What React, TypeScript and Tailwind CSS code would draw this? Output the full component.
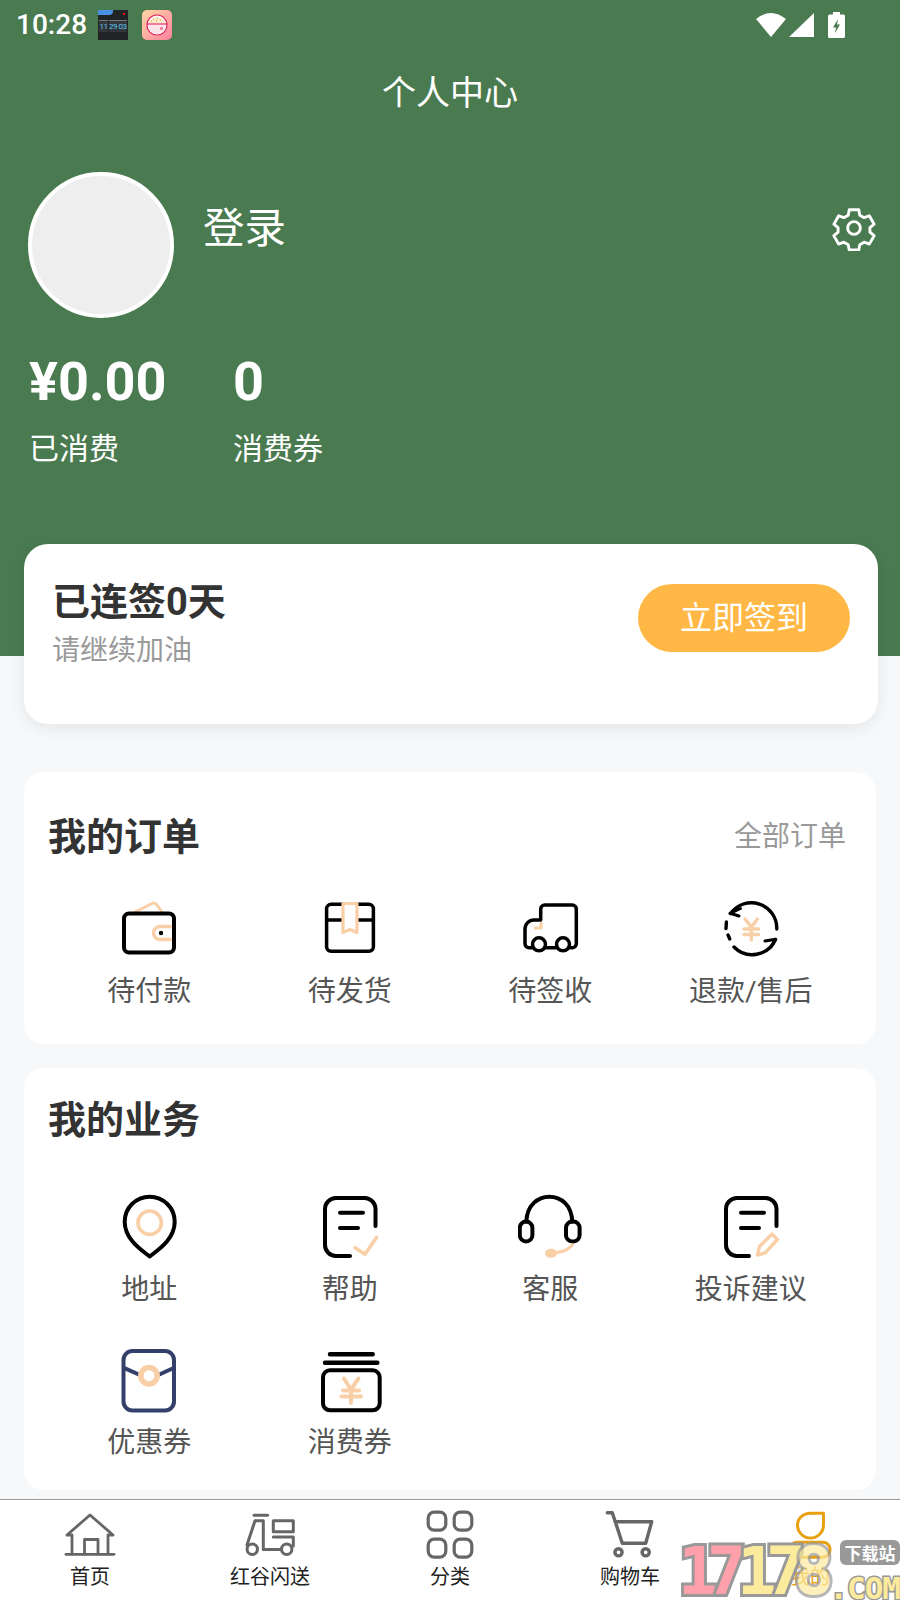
import type { ReactNode } from "react";

const PEACH = "#f8cfa6";

interface IconProps {
  children: ReactNode;
  w?: number;
  h?: number;
  stroke?: string;
  sw?: number;
}

const Icon: React.FC<IconProps> = ({ children, w = 64, h = 64, stroke = "#000", sw = 4 }) => {
  return (
    <svg width={w} height={h} viewBox={`0 0 ${w} ${h}`} fill="none" stroke={stroke} strokeWidth={sw} strokeLinecap="round" strokeLinejoin="round">
      {children}
    </svg>
  );
};

const WalletIcon = () => (
  <Icon>
    <path d="M18 16 L35 7.5 Q38 6 40 9 L45 16" stroke={PEACH} strokeWidth={3} />
    <rect x="7" y="17.5" width="50" height="39" rx="5" />
    <path d="M54.7 30.5 H43 a6.5 6.5 0 0 0 0 13 H54.7" stroke={PEACH} strokeWidth={3.4} strokeLinecap="butt" />
    <circle cx="44" cy="37" r="2.2" fill="#000" stroke="none" />
  </Icon>
);

const BoxIcon = () => (
  <Icon sw={3.5}>
    <rect x="8.6" y="8.3" width="46.8" height="47" rx="4.5" />
    <path d="M8.6 24 H55.4" />
    <path d="M25 7.5 V36.5 L32 33.5 L39 36.5 V7.5 Z" stroke={PEACH} strokeWidth={3.2} fill="#fff" />
  </Icon>
);

const TruckIcon = () => (
  <Icon sw={3.5}>
    <path d="M22.7 24 V13 a4 4 0 0 1 4-4 H54.3 a4 4 0 0 1 4 4 V47.7 a4 4 0 0 1 -4 4 H51.5 M38.5 51.7 H27.5 M14.5 51.7 H11 a4 4 0 0 1 -4-4 V33 a9 9 0 0 1 9-9 H22.7" />
    <circle cx="21" cy="48.3" r="6.5" />
    <circle cx="45" cy="48.3" r="6.5" />
    <path d="M23 27.5 V32 H17.5" stroke={PEACH} strokeWidth={3.2} />
  </Icon>
);

const RefundIcon = () => (
  <Icon sw={3.4}>
    <path d="M11.5 17.5 A25.5 25.5 0 0 1 57.8 33" />
    <path d="M21.5 12.5 L11 17.3 L20 20" strokeWidth={3} />
    <path d="M56.5 43.5 A25.5 25.5 0 0 1 15 51" />
    <path d="M46 45 L56.7 43.3 L52 51" strokeWidth={3} />
    <path d="M7.4 26 L7 32.5 M9 39 L10.8 43" />
    <path d="M26 23 L32.3 31 L38.5 23 M25 33 H39.5 M25 38.5 H39.5 M32.3 31 V44" stroke={PEACH} strokeWidth={3.4} />
  </Icon>
);

const PinIcon = () => (
  <Icon h={68}>
    <path d="M32.7 64.5 C26 59 7.7 48 7.7 29.7 A25 25 0 0 1 57.7 29.7 C57.7 48 39.4 59 32.7 64.5 Z" />
    <circle cx="32.7" cy="30.7" r="11.7" stroke={PEACH} strokeWidth={3.6} />
  </Icon>
);

const NotePath = ({ end }: { end: number }) => (
  <>
    <path d={`M57.5 34 V17 a11 11 0 0 0 -11-11 H18 a11 11 0 0 0 -11 11 V53 a11 11 0 0 0 11 11 H${end}`} />
    <path d="M22 20.7 H45 M22 36 H40" />
  </>
);

const HelpIcon = () => (
  <Icon h={68}>
    <NotePath end={32} />
    <path d="M37 55.7 L47 62.3 L58.7 45.3" stroke={PEACH} strokeWidth={3.6} />
  </Icon>
);

const HeadsetIcon = () => (
  <Icon h={68}>
    <path d="M8.3 29.7 C9 13 20 4.7 31.3 4.7 C43 4.7 53.6 13 54.3 29.7" />
    <rect x="1.8" y="29.5" width="12.6" height="20" rx="6.3" />
    <rect x="48" y="29.5" width="13.6" height="20" rx="6.3" />
    <path d="M54.3 53 C50 58 45 60 37.7 60.7" stroke={PEACH} strokeWidth={3.2} />
    <ellipse cx="33" cy="61.3" rx="6" ry="4.5" fill={PEACH} stroke="none" />
  </Icon>
);

const ComplaintIcon = () => (
  <Icon h={68}>
    <NotePath end={30} />
    <path d="M38.5 63 L40.5 54.5 L53 42 L58.5 47.5 L46 61 Z" stroke={PEACH} strokeWidth={3.4} />
  </Icon>
);

const CouponIcon = () => (
  <Icon h={68} stroke="#34406a">
    <rect x="6.5" y="6" width="50.5" height="59.5" rx="9" />
    <path d="M8 23.3 L23 30 M41.3 30 L56 23.3" />
    <circle cx="32" cy="30.7" r="8.2" stroke={PEACH} strokeWidth={5.5} />
  </Icon>
);

const VoucherIcon = () => (
  <Icon h={68} sw={4}>
    <path d="M12 9.3 H54.7 M7 17.7 H59.3" strokeWidth={4.5} />
    <rect x="5" y="25.3" width="56.7" height="40" rx="7" />
    <path d="M26 33.5 L33 44.5 L40.5 33.5 M25 45.5 H41 M23.5 51.5 H43 M33 45 V58" stroke={PEACH} />
  </Icon>
);

const HomeIcon = () => (
  <Icon w={56} h={50} stroke="#666" sw={2.8}>
    <path d="M5 25 L28 5 L51 25 H46 V44 M5 25 H10 V44 M22.5 44 V29.5 H36 V44" />
    <path d="M4 44.3 H52" />
  </Icon>
);

const ScooterIcon = () => (
  <Icon w={56} h={50} stroke="#666" sw={3}>
    <path d="M12 5.3 H25.7 M21.3 10.7 H13 L5 35 M21.3 10.7 V39.5 H39.5" />
    <rect x="31.3" y="10.7" width="20" height="11" />
    <path d="M31.3 27 H51.3 V36" />
    <circle cx="10.3" cy="39.3" r="5.2" />
    <circle cx="44.7" cy="39.3" r="5.2" />
  </Icon>
);

const GridIcon = () => (
  <Icon w={48} h={50} stroke="#666" sw={3.2}>
    <rect x="2.2" y="2.2" width="17.6" height="18" rx="6" />
    <rect x="28.2" y="2.2" width="17.6" height="18" rx="6" />
    <rect x="2.2" y="29.2" width="17.6" height="18" rx="6" />
    <rect x="28.2" y="29.2" width="17.6" height="18" rx="6" />
  </Icon>
);

const CartIcon = () => (
  <Icon w={50} h={50} stroke="#666" sw={3.4}>
    <path d="M2.3 2.7 H7.3 L17.3 33.3 H40.7 L46.7 11.7 H10" />
    <circle cx="13.5" cy="42.3" r="3.6" />
    <circle cx="40.7" cy="42.3" r="3.6" />
  </Icon>
);

const MineIcon = () => (
  <Icon w={50} h={50} stroke="#e8a010" sw={3}>
    <path d="M38.5 3.2 V15 A13 13 0 0 1 12.5 15 A13 11.8 0 0 1 25.5 3.2 Z" />
    <rect x="5" y="32.2" width="40" height="15" rx="7" />
  </Icon>
);

const StatusIcons = () => (
  <div className="flex items-center">
    <svg width="30" height="25" viewBox="0 0 30 25" fill="#fff"><path d="M0 7 Q15 -5 30 7 L15 25 Z" /></svg>
    <svg className="ml-[3px]" width="25" height="24" viewBox="0 0 25 24" fill="#fff"><path d="M25 0 V24 H0 Z" /></svg>
    <svg className="ml-[14px]" width="17" height="26" viewBox="0 0 17 26">
      <path d="M5 0 H12 V2.5 H15.5 Q17 2.5 17 4 V24.5 Q17 26 15.5 26 H1.5 Q0 26 0 24.5 V4 Q0 2.5 1.5 2.5 H5 Z" fill="#fff" />
      <path d="M10 7 L5 15.5 H8 L7 21 L12 12.5 H9 Z" fill="#4a7a50" />
    </svg>
  </div>
);

const ClockThumb = () => (
  <div className="relative flex h-[30px] w-[30px] items-end justify-between bg-[#222327] px-[1px] pb-[8px]">
    <div className="absolute top-0 left-0 h-[5px] w-[15px] rounded-br-sm bg-[#4a90e2]" />
    <div className="absolute top-[3px] right-[3px] h-[2px] w-[2px] bg-red-600" />
    {["11", "29", "03"].map((n) => (
      <span key={n} className="w-[9px] border-t border-[#777] bg-[#33363b] text-center text-[8px] leading-[11px] tracking-[-0.5px] text-[#5ac8f0]">
        {n}
      </span>
    ))}
  </div>
);

const BowlThumb = () => (
  <div className="flex h-[30px] w-[30px] items-center justify-center rounded-[5px] bg-gradient-to-br from-[#fdd6a5] to-[#ff7f9e]">
    <svg width="22" height="22" viewBox="0 0 22 22">
      <circle cx="11" cy="11" r="10" fill="#fff" stroke="#e0245e" strokeWidth="1.2" />
      <path d="M1.5 9 Q11 -3 20.5 9 Z" fill="#fbe8c8" />
      <path d="M7 5 h1 M11 4 h1 M14 6 h1 M5 7 h1 M10 7 h1" stroke="#d9a13a" strokeWidth="1" />
      <path d="M1 10 H21" stroke="#e0245e" strokeWidth="1.2" />
      <path d="M2 11 H20 Q19 19 11 20 Q3 19 2 11 Z" fill="#fde4ea" />
      <rect x="14" y="13" width="3" height="3" fill="#f08aa5" />
    </svg>
  </div>
);

interface GridItem {
  label: string;
  icon: ReactNode;
}

const orders: GridItem[] = [
  { label: "待付款", icon: <WalletIcon /> },
  { label: "待发货", icon: <BoxIcon /> },
  { label: "待签收", icon: <TruckIcon /> },
  { label: "退款/售后", icon: <RefundIcon /> },
];

const services: GridItem[] = [
  { label: "地址", icon: <PinIcon /> },
  { label: "帮助", icon: <HelpIcon /> },
  { label: "客服", icon: <HeadsetIcon /> },
  { label: "投诉建议", icon: <ComplaintIcon /> },
  { label: "优惠券", icon: <CouponIcon /> },
  { label: "消费券", icon: <VoucherIcon /> },
];

const tabs = [
  { label: "首页", icon: <HomeIcon /> },
  { label: "红谷闪送", icon: <ScooterIcon /> },
  { label: "分类", icon: <GridIcon /> },
  { label: "购物车", icon: <CartIcon /> },
  { label: "我的", icon: <MineIcon />, active: true },
];

const Watermark = () => (
  <div className="pointer-events-none absolute right-0 bottom-0 h-[60px] w-[222px] overflow-hidden font-['DejaVu_Sans_Mono',monospace] font-bold">
    <div className="absolute top-[-8px] left-0 flex text-[66px] leading-[80px] [-webkit-text-stroke:6px_#999] [paint-order:stroke_fill]">
      <span className="w-[29px] text-[#ffa0aa]">1</span>
      <span className="w-[30px] text-[#ffa0aa]">7</span>
      <span className="w-[29px] text-[#fdeb9d]">1</span>
      <span className="w-[28px] text-[#fdeb9d]">7</span>
      <span className="w-[40px] text-[#fdeb9d] opacity-70">8</span>
    </div>
    <div className="absolute top-0 right-0 flex h-[25px] w-[60px] items-center justify-center rounded-[6px] bg-[#999] font-['Noto_Sans_CJK_SC',sans-serif] text-[17px] leading-none text-white">
      下载站
    </div>
    <div className="absolute top-[31px] right-0 text-[31px] leading-[34px] tracking-[-1px] text-[#fdeb9d] [-webkit-text-stroke:3px_#999] [paint-order:stroke_fill]">
      .COM
    </div>
  </div>
);

const App = () => {
  return (
    <div className="relative flex h-[1600px] w-[900px] flex-col overflow-hidden bg-[#f7f8fa] font-[Roboto,'Noto_Sans_CJK_SC',sans-serif]">
      <header className="h-[656px] shrink-0 bg-[#4a7a50] text-white">
        <div className="flex h-[48px] items-center justify-between pt-[1px] pr-[55px] pl-[16px]">
          <div className="flex items-center">
            <span className="text-[28px] font-medium leading-none">10:28</span>
            <div className="ml-[11px] flex gap-[14px]">
              <ClockThumb />
              <BowlThumb />
            </div>
          </div>
          <StatusIcons />
        </div>
        <h1 className="mt-[22px] text-center text-[34px] leading-[46px] font-normal">个人中心</h1>
        <div className="mt-[56px] flex items-start pr-[23px] pl-[28px]">
          <div className="h-[146px] w-[146px] rounded-full border-[4px] border-white bg-[#eeeeee]" />
          <div className="mt-[28px] ml-[29px] flex-1 text-[41.5px] leading-[58px]">登录</div>
          <svg className="mt-[33px]" width="46" height="46" viewBox="0 0 24 24" fill="none" stroke="#fff" strokeWidth="1.5" strokeLinejoin="round">
            <path d="M9.5 2.5 h5 l.5 2.8 2.3 1.3 2.7-1 2.5 4.4-2.2 1.8 v2.4 l2.2 1.8-2.5 4.4-2.7-1-2.3 1.3-.5 2.8 h-5 l-.5-2.8-2.3-1.3-2.7 1-2.5-4.4 2.2-1.8 v-2.4 l-2.2-1.8 2.5-4.4 2.7 1 2.3-1.3 Z" />
            <circle cx="12" cy="12" r="3.3" />
          </svg>
        </div>
        <div className="mt-[29px] flex pl-[29px]">
          <div className="w-[205px]">
            <div className="text-[54px] leading-[70px] font-bold">¥0.00</div>
            <div className="mt-[12px] text-[30px] leading-[40px]">已消费</div>
          </div>
          <div className="-ml-[1px]">
            <div className="text-[54px] leading-[70px] font-bold">0</div>
            <div className="mt-[12px] text-[30px] leading-[40px]">消费券</div>
          </div>
        </div>
      </header>

      <section className="mr-[22px] ml-[24px] -mt-[112px] flex h-[180px] shrink-0 items-start justify-between rounded-[24px] bg-white pt-[40px] pr-[28px] pl-[28px] shadow-[0_4px_16px_rgba(0,0,0,0.08)]">
        <div>
          <div className="text-[38px] leading-[36px] font-bold text-[#333]">已连签0天</div>
          <div className="mt-[13px] text-[28px] leading-[36px] text-[#999]">请继续加油</div>
        </div>
        <button className="h-[68px] w-[212px] rounded-full bg-[#ffb845] text-[32px] leading-none text-white">立即签到</button>
      </section>

      <section className="mx-[24px] mt-[48px] h-[272px] shrink-0 rounded-[20px] bg-white pr-[25px] pl-[25px]">
        <div className="flex items-center justify-between pt-[40px] pr-[5px]">
          <h2 className="-ml-[1px] text-[38px] leading-[50px] font-bold text-[#333]">我的订单</h2>
          <span className="text-[28px] leading-[40px] text-[#999]">全部订单</span>
        </div>
        <div className="mt-[34px] grid grid-cols-4">
          {orders.map((item) => (
            <div key={item.label} className="flex flex-col items-center">
              {item.icon}
              <span className="mt-[12px] text-[28px] leading-[40px] text-[#555]">{item.label}</span>
            </div>
          ))}
        </div>
      </section>

      <section className="mx-[24px] mt-[24px] h-[422px] shrink-0 rounded-[20px] bg-white px-[25px]">
        <h2 className="-ml-[1px] pt-[27px] text-[38px] leading-[50px] font-bold text-[#333]">我的业务</h2>
        <div className="mt-[47px] grid grid-cols-4 gap-y-[35px]">
          {services.map((item) => (
            <div key={item.label} className="flex flex-col items-center">
              {item.icon}
              <span className="mt-[10px] text-[28px] leading-[40px] text-[#555]">{item.label}</span>
            </div>
          ))}
        </div>
      </section>

      <nav className="mt-[9px] grid h-[101px] shrink-0 grid-cols-5 border-t border-[#999] bg-white">
        {tabs.map((tab) => (
          <div key={tab.label} className="flex flex-col items-center pt-[10px]">
            {tab.icon}
            <span className={`mt-[2px] text-[20px] leading-[30px] ${tab.active ? "text-[#e8a010]" : "text-[#222]"}`}>{tab.label}</span>
          </div>
        ))}
      </nav>
      <Watermark />
    </div>
  );
};

export default App;
